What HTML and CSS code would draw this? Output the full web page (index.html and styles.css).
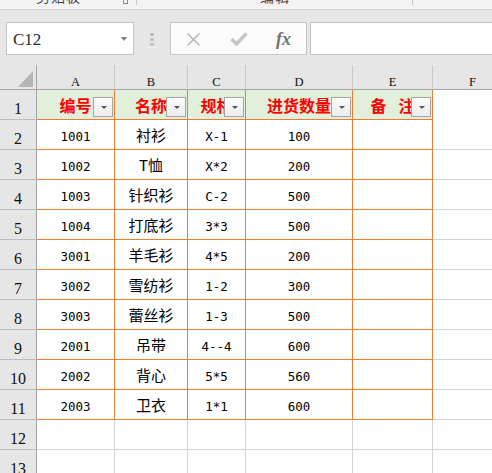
FILE: index.html
```html
<!DOCTYPE html>
<html lang="zh-CN">
<head>
<meta charset="utf-8">
<title>Sheet</title>
<link rel="stylesheet" href="styles.css">
</head>
<body>
<div class="ribbon">
  <div class="grp grp-clip"><span class="glabel">剪贴板</span><span class="launcher"></span></div>
  <div class="grp grp-edit"><span class="glabel">编辑</span></div>
</div>

<div class="fbar">
  <div class="namebox"><span class="ref">C12</span><span class="caret"></span></div>
  <div class="grip"><i></i><i></i><i></i></div>
  <div class="fxbox">
    <span class="slot">
      <svg width="15" height="15" viewBox="0 0 15 15"><path d="M1.5 1.5 L13.5 13.5 M13.5 1.5 L1.5 13.5" stroke="#b9b9b9" stroke-width="1.6" fill="none"/></svg>
    </span>
    <span class="slot">
      <svg width="18" height="14" viewBox="0 0 18 14"><path d="M1.5 7 L6.5 12 L16.5 1.5" stroke="#c6c6c6" stroke-width="3.4" fill="none"/></svg>
    </span>
    <span class="slot"><span class="fx">fx</span></span>
  </div>
  <div class="input"></div>
</div>

<div class="sheet">
  <div class="corner"><span class="tri"></span></div>
  <div class="ch">A</div><div class="ch">B</div><div class="ch">C</div><div class="ch">D</div><div class="ch">E</div><div class="ch">F</div>

  <div class="rh">1</div>
  <div class="c o hd">编号<span class="fb"></span></div>
  <div class="c o hd">名称<span class="fb"></span></div>
  <div class="c o hd">规格<span class="fb"></span></div>
  <div class="c o hd">进货数量<span class="fb"></span></div>
  <div class="c o hd">备<span class="gap"></span>注<span class="fb"></span></div>
  <div class="c nb"></div>

  <div class="rh">2</div><div class="c o m">1001</div><div class="c o z">衬衫</div><div class="c o m">X-1</div><div class="c o m">100</div><div class="c o"></div><div class="c"></div>
  <div class="rh">3</div><div class="c o m">1002</div><div class="c o z">T恤</div><div class="c o m">X*2</div><div class="c o m">200</div><div class="c o"></div><div class="c"></div>
  <div class="rh">4</div><div class="c o m">1003</div><div class="c o z">针织衫</div><div class="c o m">C-2</div><div class="c o m">500</div><div class="c o"></div><div class="c"></div>
  <div class="rh">5</div><div class="c o m">1004</div><div class="c o z">打底衫</div><div class="c o m">3*3</div><div class="c o m">500</div><div class="c o"></div><div class="c"></div>
  <div class="rh">6</div><div class="c o m">3001</div><div class="c o z">羊毛衫</div><div class="c o m">4*5</div><div class="c o m">200</div><div class="c o"></div><div class="c"></div>
  <div class="rh">7</div><div class="c o m">3002</div><div class="c o z">雪纺衫</div><div class="c o m">1-2</div><div class="c o m">300</div><div class="c o"></div><div class="c"></div>
  <div class="rh">8</div><div class="c o m">3003</div><div class="c o z">蕾丝衫</div><div class="c o m">1-3</div><div class="c o m">500</div><div class="c o"></div><div class="c"></div>
  <div class="rh">9</div><div class="c o m">2001</div><div class="c o z">吊带</div><div class="c o m">4--4</div><div class="c o m">600</div><div class="c o"></div><div class="c"></div>
  <div class="rh">10</div><div class="c o m">2002</div><div class="c o z">背心</div><div class="c o m">5*5</div><div class="c o m">560</div><div class="c o"></div><div class="c"></div>
  <div class="rh">11</div><div class="c o m">2003</div><div class="c o z">卫衣</div><div class="c o m">1*1</div><div class="c o m">600</div><div class="c o"></div><div class="c"></div>

  <div class="rh">12</div><div class="c"></div><div class="c"></div><div class="c"></div><div class="c"></div><div class="c"></div><div class="c"></div>
  <div class="rh">13</div><div class="c"></div><div class="c"></div><div class="c"></div><div class="c"></div><div class="c"></div><div class="c"></div>
</div>
</body>
</html>
```
FILE: styles.css
```css
* { box-sizing: border-box; margin: 0; padding: 0; }
html, body { width: 492px; height: 473px; overflow: hidden; }
body { background: #e7e7e7; font-family: "Noto Sans CJK SC", sans-serif; color: #000; }

/* ribbon remnant */
.ribbon { height: 10px; background: #f3f3f3; border-bottom: 1px solid #d6d6d6; display: flex; overflow: hidden; }
.grp { position: relative; height: 9px; display: flex; overflow: hidden; }
.grp::after { content: ""; position: absolute; right: 0; top: 0; width: 1px; height: 5px; background: #c8c8c8; }
.grp-clip { width: 137px; padding-left: 36px; }
.grp-edit { width: 276px; justify-content: center; }
.glabel { font-size: 14px; line-height: 14px; margin-top: -11px; color: #444; letter-spacing: 1px; }
.launcher { position: absolute; left: 123px; top: -2px; width: 5px; height: 6px; border: 1px solid #8a8a8a; border-top: none; }

/* formula bar */
.fbar { display: flex; align-items: flex-start; height: 55px; padding: 12px 0 0 6px; }
.namebox { width: 128px; height: 33px; background: #fff; border: 1px solid #c6c6c6; display: flex; align-items: center; justify-content: space-between; padding: 2px 6px 0 6px; }
.ref { font-family: "Liberation Serif", serif; font-size: 17px; line-height: 17px; color: #2b2b2b; }
.caret { width: 0; height: 0; border-left: 3.5px solid transparent; border-right: 3.5px solid transparent; border-top: 4px solid #7a7a7a; margin-top: -2px; }
.grip { width: 36px; height: 33px; display: flex; flex-direction: column; align-items: center; justify-content: center; gap: 2px; padding-top: 2px; }
.grip i { display: block; width: 4px; height: 3px; background: #c2c2c2; }
.fxbox { width: 137px; height: 33px; background: #fcfcfc; border: 1px solid #c6c6c6; display: flex; }
.slot { width: 45px; display: flex; align-items: center; justify-content: center; padding-top: 1px; }
.fx { font-family: "Liberation Serif", serif; font-style: italic; font-weight: bold; font-size: 18px; line-height: 18px; color: #727272; }
.input { flex: 1; margin-left: 3px; height: 33px; background: #fff; border: 1px solid #c6c6c6; border-right: none; }

/* sheet grid */
.sheet { display: grid; grid-template-columns: 37px 78px 73px 58px 107px 80px 80px; grid-template-rows: 25px; grid-auto-rows: 30px; width: 513px; background: #fff; }
.corner { position: relative; background: #e6e6e6; border-right: 1px solid #a3a3a3; border-bottom: 1px solid #a3a3a3; }
.tri { position: absolute; right: 3px; bottom: 2px; width: 0; height: 0; border-left: 15px solid transparent; border-bottom: 16px solid #b5b5b5; }
.ch { background: #e6e6e6; border-right: 1px solid #c9c9c9; border-bottom: 1px solid #a3a3a3; display: flex; justify-content: center; align-items: center; padding-top: 9px; font-family: "Liberation Serif", serif; font-size: 12.5px; line-height: 12px; color: #111; }
.rh { background: #e6e6e6; border-right: 1px solid #a3a3a3; border-bottom: 1px solid #bdbdbd; display: flex; justify-content: center; align-items: center; padding-top: 9px; font-family: "Liberation Serif", serif; font-size: 16px; line-height: 16px; color: #111; }

.c { position: relative; border-right: 1px solid #d4d4d4; border-bottom: 1px solid #d4d4d4; display: flex; align-items: center; justify-content: center; overflow: hidden; white-space: nowrap; }
.c.o { border-color: #ed7d31; }
.c.nb { border-bottom-color: transparent; }
.m { font-family: "DejaVu Sans Mono", monospace; font-size: 12.5px; padding-top: 3px; color: #000; }
.z { font-family: "Noto Sans CJK SC", sans-serif; font-size: 15px; }

.hd { background: #e2efda; color: #ff0000; font-weight: bold; font-size: 16px; font-family: "Noto Sans CJK SC", sans-serif; }
.gap { display: inline-block; width: 12px; }
.fb { position: absolute; right: 1px; top: 7px; width: 20px; height: 20px; border: 1px solid #a5a5a5; background: linear-gradient(#fdfdfd, #ececec); }
.fb::after { content: ""; position: absolute; left: 6.5px; top: 7.5px; width: 0; height: 0; border-left: 3px solid transparent; border-right: 3px solid transparent; border-top: 3px solid #555; }
```
